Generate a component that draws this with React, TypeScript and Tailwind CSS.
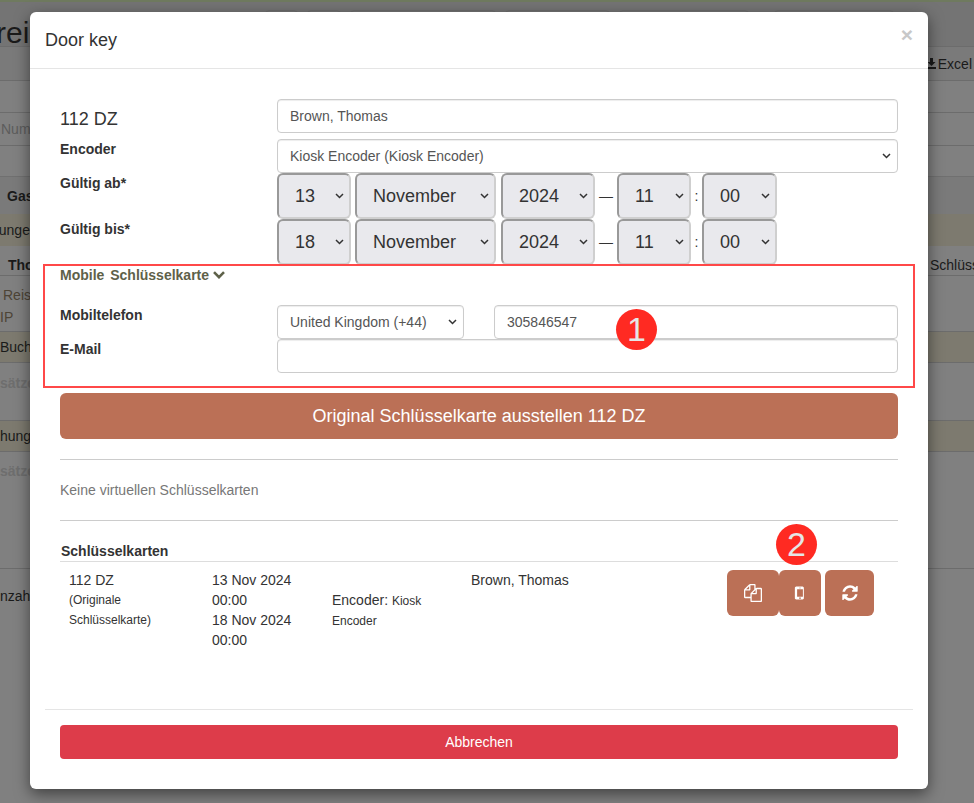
const FilesIcon = () => (
  <svg width="18" height="18" viewBox="0 0 1792 1792" fill="currentColor">
    <path d="M1696 384q40 0 68 28t28 68v1216q0 40-28 68t-68 28h-960q-40 0-68-28t-28-68v-288h-544q-40 0-68-28t-28-68v-672q0-40 20-88t48-76l408-408q28-28 76-48t88-20h416q40 0 68 28t28 68v328q68-40 128-40h416zm-544 213l-299 299h299v-299zm-640-384l-299 299h299v-299zm196 647l316-316v-416h-384v416q0 40-28 68t-68 28h-416v640h512v-256q0-40 20-92t48-80zm956 804v-1152h-384v416q0 40-28 68t-68 28h-416v640h896z" />
  </svg>
);

const MobileIcon = () => (
  <svg width="18" height="18" viewBox="0 0 1792 1792" fill="currentColor">
    <path d="M976 1408q0-33-23.5-56.5t-56.5-23.5-56.5 23.5-23.5 56.5 23.5 56.5 56.5 23.5 56.5-23.5 23.5-56.5zm208-160v-704q0-13-9.5-22.5t-22.5-9.5h-512q-13 0-22.5 9.5t-9.5 22.5v704q0 13 9.5 22.5t22.5 9.5h512q13 0 22.5-9.5t9.5-22.5zm-192-848q0-16-16-16h-160q-16 0-16 16t16 16h160q16 0 16-16zm288-16v1024q0 52-38 90t-90 38h-640q-52 0-90-38t-38-90v-1024q0-52 38-90t90-38h640q52 0 90 38t38 90z" />
  </svg>
);

const RefreshIcon = () => (
  <svg width="18" height="18" viewBox="0 0 1792 1792" fill="currentColor">
    <path d="M1639 1056q0 5-1 7-64 268-268 434.5t-478 166.5q-146 0-282.5-55t-243.5-157l-129 129q-19 19-45 19t-45-19-19-45v-448q0-26 19-45t45-19h448q26 0 45 19t19 45-19 45l-137 137q71 66 161 102t187 36q134 0 250-65t186-179q11-17 53-117 8-23 30-23h192q13 0 22.5 9.5t9.5 22.5zm25-800v448q0 26-19 45t-45 19h-448q-26 0-45-19t-19-45 19-45l138-138q-148-137-349-137-134 0-250 65t-186 179q-11 17-53 117-8 23-30 23h-199q-13 0-22.5-9.5t-9.5-22.5v-7q65-268 270-434.5t480-166.5q146 0 284 55.5t245 156.5l130-129q19-19 45-19t45 19 19 45z" />
  </svg>
);

const Caret = () => (
  <svg
    className="pointer-events-none absolute right-[7px] top-1/2 -translate-y-1/2 text-[#333]"
    width="9"
    height="6"
    viewBox="0 0 9 6"
    fill="none"
    stroke="currentColor"
    strokeWidth="1.5"
  >
    <path d="M1 1l3.5 3.5L8 1" />
  </svg>
);

const inputClass =
  "block h-[34px] w-full rounded border border-[#ccc] bg-white px-3 text-sm text-[#555] shadow-[inset_0_1px_1px_rgba(0,0,0,0.075)]";

const FormSelect = ({ text }: { text: string }) => (
  <div className="relative">
    <select className={`${inputClass} appearance-none`} defaultValue={text}>
      <option>{text}</option>
    </select>
    <Caret />
  </div>
);

const DateSelect = ({ text, className }: { text: string; className: string }) => (
  <div className={`relative ${className}`}>
    <select
      className="h-[46px] w-full appearance-none rounded-md border-2 border-b-[#cfcfcf] border-l-[#999] border-r-[#cfcfcf] border-t-[#999] bg-[#e9e9ed] pl-[16px] text-lg text-[#333]"
      defaultValue={text}
    >
      <option>{text}</option>
    </select>
    <Caret />
  </div>
);

const DateRow = ({ day }: { day: string }) => (
  <div className="flex items-center">
    <DateSelect text={day} className="w-[74px]" />
    <DateSelect text="November" className="ml-[4px] w-[141px]" />
    <DateSelect text="2024" className="ml-[5px] w-[94px]" />
    <span className="mx-[3px] w-[16px] text-center text-sm text-[#333]">—</span>
    <DateSelect text="11" className="w-[74px]" />
    <span className="w-[11px] text-center text-sm text-[#333]">:</span>
    <DateSelect text="00" className="w-[75px]" />
  </div>
);

const BackdropRow = ({
  className,
  left,
  right,
}: {
  className: string;
  left?: string;
  right?: string;
}) => (
  <div className={`flex items-center justify-between overflow-hidden whitespace-nowrap text-sm text-[#1a1a1a] ${className}`}>
    <span>{left}</span>
    {right && <span className="w-[44px] overflow-hidden font-normal">{right}</span>}
  </div>
);

const Badge = ({ className, children }: { className: string; children: string }) => (
  <div className={`absolute flex h-[41px] w-[41px] items-center justify-center rounded-full bg-[#ff2a22] text-[34px] text-[#e6e6e6] ${className}`}>
    {children}
  </div>
);

export default function App() {
  return (
    <div className="relative h-[803px] w-[974px] overflow-hidden bg-[#808080] font-['Liberation_Sans',Arial,sans-serif]">
      {/* page behind the dialog */}
      <div className="flex flex-col">
        <div className="h-[2px] bg-[#6f7a5f]" />
        <div className="flex h-[45px] gap-[9px] border-b border-[#6c6c6c] bg-[#747474] pl-[265px] pt-[8px]">
          <div className="h-[12px] w-[33px] rounded-t border border-[#6c6c6c]" />
          <div className="h-[12px] w-[34px] rounded-t border border-[#6c6c6c]" />
          <div className="h-[12px] w-[146px] rounded-t border border-[#6c6c6c]" />
          <div className="h-[12px] w-[105px] rounded-t border border-[#6c6c6c]" />
          <div className="h-[12px] w-[130px] rounded-t border border-[#6c6c6c]" />
          <div className="ml-[16px] h-[12px] w-[120px] rounded-t border border-[#6c6c6c]" />
        </div>
        <div className="flex h-[34px] items-center justify-end gap-[2px] border-b border-[#6c6c6c] bg-[#7a7a7a] pr-[2px] text-sm text-[#1a1a1a]">
          <svg width="9" height="11" viewBox="0 0 9 11" fill="currentColor">
            <path d="M3 0h3v4h2.5L4.5 8 .5 4H3zM0 9h9v2H0z" />
          </svg>
          Excel
        </div>
        <div className="h-[31px]" />
        <BackdropRow className="h-[34px] border-y border-[#6c6c6c] pl-[1px] text-[#5c5c5c]" left="Num" />
        <div className="h-[31px] border-b border-[#707070]" />
        <BackdropRow className="h-[37px] bg-[#7a7a7a] pl-[7px] font-bold" left="Gas" />
        <BackdropRow className="h-[32px] bg-[#7d7a6f] pl-[0px] [&>span:first-child]:-ml-[9px]" left="hunge" />
        <BackdropRow className="h-[30px] border-b border-[#6c6c6c] pl-[8px] pt-[8px] font-bold" left="Tho" right="Schlüsse" />
        <div className="h-[8px]" />
        <BackdropRow className="h-[22px] pl-[3px] text-[#4d4436]" left="Reis" />
        <BackdropRow className="h-[22px] text-[#4d4436]" left="IP" />
        <div className="h-[3px]" />
        <BackdropRow className="h-[32px] border-y border-[#6c6c6c] bg-[#7d7a6f]" left="Buchu" />
        <BackdropRow className="h-[57px] pb-[18px] font-bold text-[#6e6e6e]" left="sätze" />
        <BackdropRow className="h-[32px] border-y border-[#6c6c6c] bg-[#7d7a6f]" left="hung" />
        <BackdropRow className="h-[38px] font-bold text-[#6e6e6e]" left="sätze" />
        <div className="h-[79px] border-b border-[#6c6c6c]" />
        <BackdropRow className="h-[54px]" left="nzahl v" />
      </div>

      <div className="absolute left-[-4px] top-[18px] text-[30px] leading-[30px] text-[#1a1a1a]">rei</div>

      {/* dialog */}
      <div className="absolute left-[30px] top-[12px] flex h-[777px] w-[898px] flex-col rounded-md bg-white text-sm text-[#333] shadow-[0_5px_15px_rgba(0,0,0,0.5)]">
        <div className="flex h-[57px] items-center justify-between border-b border-[#e5e5e5] pl-[15px] pr-[15px]">
          <h4 className="text-lg text-[#333]">Door key</h4>
          <span className="-mt-[11px] text-[21px] font-bold text-[#c8c8c8]">×</span>
        </div>

        <div className="flex flex-1 flex-col px-[30px] pt-[30px]">
          <div className="grid grid-cols-[217px_1fr]">
            <div className="pt-[10px] text-lg leading-[20px]">112 DZ</div>
            <input className={inputClass} readOnly value="Brown, Thomas" />
          </div>
          <div className="mt-[6px] grid grid-cols-[217px_1fr]">
            <label className="font-bold">Encoder</label>
            <FormSelect text="Kiosk Encoder (Kiosk Encoder)" />
          </div>
          <div className="grid grid-cols-[217px_1fr]">
            <label className="font-bold">Gültig ab*</label>
            <DateRow day="13" />
          </div>
          <div className="grid grid-cols-[217px_1fr]">
            <label className="font-bold">Gültig bis*</label>
            <DateRow day="18" />
          </div>

          <div className="flex items-center gap-[4px] font-bold leading-[20px] text-[#5e6149] [word-spacing:2px]">
            Mobile Schlüsselkarte
            <svg width="12" height="8" viewBox="0 0 12 8" fill="none" stroke="currentColor" strokeWidth="2.6">
              <path d="M1 1.2l5 5 5-5" />
            </svg>
          </div>

          <div className="mt-[20px] grid grid-cols-[217px_187px_1fr]">
            <label className="font-bold">Mobiltelefon</label>
            <FormSelect text="United Kingdom (+44)" />
            <input className={`${inputClass} ml-[30px] !w-[404px]`} readOnly value="305846547" />
          </div>
          <div className="grid grid-cols-[217px_1fr]">
            <label className="font-bold">E-Mail</label>
            <input className={inputClass} readOnly value="" />
          </div>

          <button className="mt-[20px] h-[46px] rounded-md bg-[#bb7056] text-lg text-white">
            Original Schlüsselkarte ausstellen 112 DZ
          </button>

          <hr className="mt-[20px] border-[#ccc]" />
          <p className="mt-[20px] leading-[20px] text-[#777]">Keine virtuellen Schlüsselkarten</p>
          <hr className="mt-[20px] border-[#ccc]" />

          <div className="mt-[21px] border-b border-[#ddd] pb-[1px] pl-[1px] font-bold leading-[18px]">Schlüsselkarten</div>

          <div className="mt-[8px] flex leading-[20px]">
            <div className="w-[152px] pl-[9px]">
              <div>112 DZ</div>
              <div className="text-xs leading-[20px]">(Originale</div>
              <div className="text-xs leading-[20px]">Schlüsselkarte)</div>
            </div>
            <div className="w-[120px]">
              <div>13 Nov 2024</div>
              <div>00:00</div>
              <div>18 Nov 2024</div>
              <div>00:00</div>
            </div>
            <div className="w-[139px] pt-[20px]">
              <div>
                Encoder: <span className="text-xs leading-[20px]">Kiosk</span>
              </div>
              <div className="text-xs leading-[20px]">Encoder</div>
            </div>
            <div className="w-[256px]">Brown, Thomas</div>
            <div className="flex items-start text-white">
              <button className="flex h-[46px] w-[52px] items-center justify-center rounded-md bg-[#bb7056]">
                <FilesIcon />
              </button>
              <button className="flex h-[46px] w-[42px] items-center justify-center rounded-md bg-[#bb7056]">
                <MobileIcon />
              </button>
              <button className="ml-[4px] flex h-[46px] w-[49px] items-center justify-center rounded-md bg-[#bb7056]">
                <RefreshIcon />
              </button>
            </div>
          </div>
        </div>

        <div className="mx-[15px] flex h-[80px] flex-col border-t border-[#e5e5e5] px-[15px] pt-[15px]">
          <button className="h-[34px] w-full rounded bg-[#dd3c4a] text-sm text-white">Abbrechen</button>
        </div>
      </div>

      {/* annotations on top of the screenshot */}
      <div className="absolute left-[43px] top-[264px] h-[124px] w-[872px] border-2 border-[#ff4848]" />
      <Badge className="left-[616px] top-[309px]">1</Badge>
      <Badge className="left-[776px] top-[524px]">2</Badge>
    </div>
  );
}
